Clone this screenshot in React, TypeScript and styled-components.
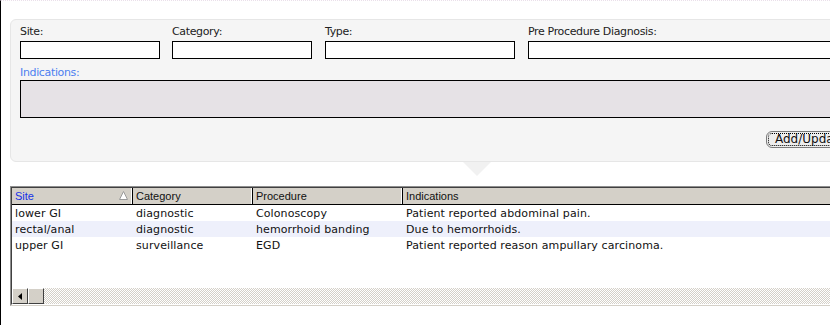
import React from "react";
import styled, { createGlobalStyle } from "styled-components";

const GlobalStyle = createGlobalStyle`
  html, body {
    margin: 0;
    padding: 0;
    background: #fff;
  }
  body {
    font-family: "DejaVu Sans", Tahoma, sans-serif;
    font-size: 11px;
    color: #111;
  }
`;

const Page = styled.div`
  width: 830px;
  height: 325px;
  box-sizing: border-box;
  border-left: 1px solid #000;
  border-top: 1px dotted #eadfea;
  padding: 18px 0 0 9px;
  overflow: hidden;
`;

const Panel = styled.div`
  position: relative;
  width: 900px;
  box-sizing: border-box;
  background: #f5f5f5;
  border: 1px solid #e6e6e6;
  border-radius: 6px;
  padding: 5px 9px 13px;
`;

const Arrow = styled.div`
  position: absolute;
  left: 452px;
  bottom: -15px;
  width: 0;
  height: 0;
  border-left: 14px solid transparent;
  border-right: 14px solid transparent;
  border-top: 14px solid #f1f1f1;
`;

const FieldRow = styled.div`
  display: flex;
`;

const Field = styled.div<{ $w: number; $mr: number }>`
  display: flex;
  flex-direction: column;
  gap: 2px;
  width: ${(p) => p.$w}px;
  margin-right: ${(p) => p.$mr}px;
`;

const Label = styled.label<{ $blue?: boolean }>`
  display: block;
  height: 14px;
  line-height: 14px;
  font-size: 11px;
  letter-spacing: -0.35px;
  color: ${(p) => (p.$blue ? "#4c7ff0" : "#222")};
`;

const TextBox = styled.div`
  height: 18px;
  box-sizing: border-box;
  border: 1px solid #000;
  background: #fff;
`;

const IndicationsBlock = styled.div`
  margin-top: 7px;
  display: flex;
  flex-direction: column;
`;

const TextArea = styled.div`
  height: 38px;
  box-sizing: border-box;
  border: 1px solid #000;
  background: #e6e2e6;
`;

const ButtonRow = styled.div`
  margin-top: 13px;
  padding-left: 746px;
  display: flex;
`;

const Button = styled.button`
  height: 17px;
  padding: 0 8px;
  border: 1px solid #7a7a7a;
  border-radius: 6px;
  background: #eeeeee;
  outline: 1px dotted #000;
  outline-offset: -3px;
  font-family: "DejaVu Sans", Tahoma, sans-serif;
  font-size: 12px;
  line-height: 15px;
  color: #111;
  white-space: nowrap;
`;

const Grid = styled.div`
  margin-top: 24px;
  width: 900px;
  border-top: 1px solid #8e8e8e;
  border-left: 1px solid #8e8e8e;
  border-bottom: 1px solid #d4d0c8;
`;

const GridInner = styled.div`
  border-top: 1px solid #404040;
  border-left: 1px solid #404040;
  border-bottom: 1px solid #fff;
`;

const HeaderRow = styled.div`
  display: flex;
  height: 16px;
  border-bottom: 1px solid #000;
  background: #d4d0c8;
`;

const HeaderCell = styled.div<{ $w?: number; $active?: boolean }>`
  position: relative;
  ${(p) => (p.$w ? `width: ${p.$w}px;` : "flex: 1;")}
  box-sizing: border-box;
  border-right: 1px solid #000;
  box-shadow: inset -1px 0 0 #fff;
  padding-left: 3px;
  font-family: "Liberation Sans", Arial, sans-serif;
  font-size: 11px;
  line-height: 17px;
  color: ${(p) => (p.$active ? "#1530e8" : "#111")};
`;

const SortGlyph = styled.svg`
  position: absolute;
  right: 4px;
  top: 3px;
`;

const Body = styled.div`
  height: 83px;
  background: #fff;
`;

const Row = styled.div<{ $alt?: boolean }>`
  display: flex;
  height: 16px;
  background: ${(p) => (p.$alt ? "#eef0fb" : "#fff")};
`;

const Cell = styled.div<{ $w?: number }>`
  ${(p) => (p.$w ? `width: ${p.$w}px;` : "flex: 1;")}
  box-sizing: border-box;
  padding-left: 3px;
  font-size: 11px;
  letter-spacing: 0.1px;
  line-height: 17px;
  color: #111;
  white-space: nowrap;
`;

const ScrollBar = styled.div`
  display: flex;
  height: 16px;
  background-color: #fff;
  background-image: conic-gradient(#d4d0c8 25%, #fff 0 50%, #d4d0c8 0 75%, #fff 0);
  background-size: 2px 2px;
`;

const ScrollButton = styled.div`
  width: 16px;
  height: 16px;
  box-sizing: border-box;
  background: #d4d0c8;
  border-top: 1px solid #fff;
  border-left: 1px solid #fff;
  border-right: 1px solid #404040;
  border-bottom: 1px solid #404040;
  display: flex;
  align-items: center;
  justify-content: center;
`;

const columns = [
  { key: "site", title: "Site", w: 121 },
  { key: "category", title: "Category", w: 120 },
  { key: "procedure", title: "Procedure", w: 150 },
  { key: "indications", title: "Indications" },
] as const;

const rows = [
  ["lower GI", "diagnostic", "Colonoscopy", "Patient reported abdominal pain."],
  ["rectal/anal", "diagnostic", "hemorrhoid banding", "Due to hemorrhoids."],
  ["upper GI", "surveillance", "EGD", "Patient reported reason ampullary carcinoma."],
];

const fields = [
  { label: "Site:", w: 140, mr: 12 },
  { label: "Category:", w: 140, mr: 13 },
  { label: "Type:", w: 190, mr: 13 },
  { label: "Pre Procedure Diagnosis:", w: 340, mr: 0 },
];

const App: React.FC = () => (
  <>
    <GlobalStyle />
    <Page>
      <Panel>
        <FieldRow>
          {fields.map((f) => (
            <Field key={f.label} $w={f.w} $mr={f.mr}>
              <Label>{f.label}</Label>
              <TextBox />
            </Field>
          ))}
        </FieldRow>
        <IndicationsBlock>
          <Label $blue>Indications:</Label>
          <TextArea />
        </IndicationsBlock>
        <ButtonRow>
          <Button>Add/Update</Button>
        </ButtonRow>
        <Arrow />
      </Panel>
      <Grid>
        <GridInner>
          <HeaderRow>
            {columns.map((c, i) => (
              <HeaderCell key={c.key} $w={"w" in c ? c.w : undefined} $active={i === 0}>
                {c.title}
                {i === 0 && (
                  <SortGlyph width="9" height="9" viewBox="0 0 9 9">
                    <path d="M4.5 0.5 L8.5 8.5 L0.5 8.5 Z" fill="#fff" stroke="#9a9a9a" strokeWidth="1" />
                  </SortGlyph>
                )}
              </HeaderCell>
            ))}
          </HeaderRow>
          <Body>
            {rows.map((r, i) => (
              <Row key={r[0]} $alt={i === 1}>
                {r.map((v, j) => {
                  const c = columns[j];
                  return (
                    <Cell key={c.key} $w={"w" in c ? c.w : undefined}>
                      {v}
                    </Cell>
                  );
                })}
              </Row>
            ))}
          </Body>
          <ScrollBar>
            <ScrollButton>
              <svg width="4" height="7" viewBox="0 0 4 7">
                <path d="M4 0 L0 3.5 L4 7 Z" fill="#000" />
              </svg>
            </ScrollButton>
            <ScrollButton />
          </ScrollBar>
        </GridInner>
      </Grid>
    </Page>
  </>
);

export default App;
